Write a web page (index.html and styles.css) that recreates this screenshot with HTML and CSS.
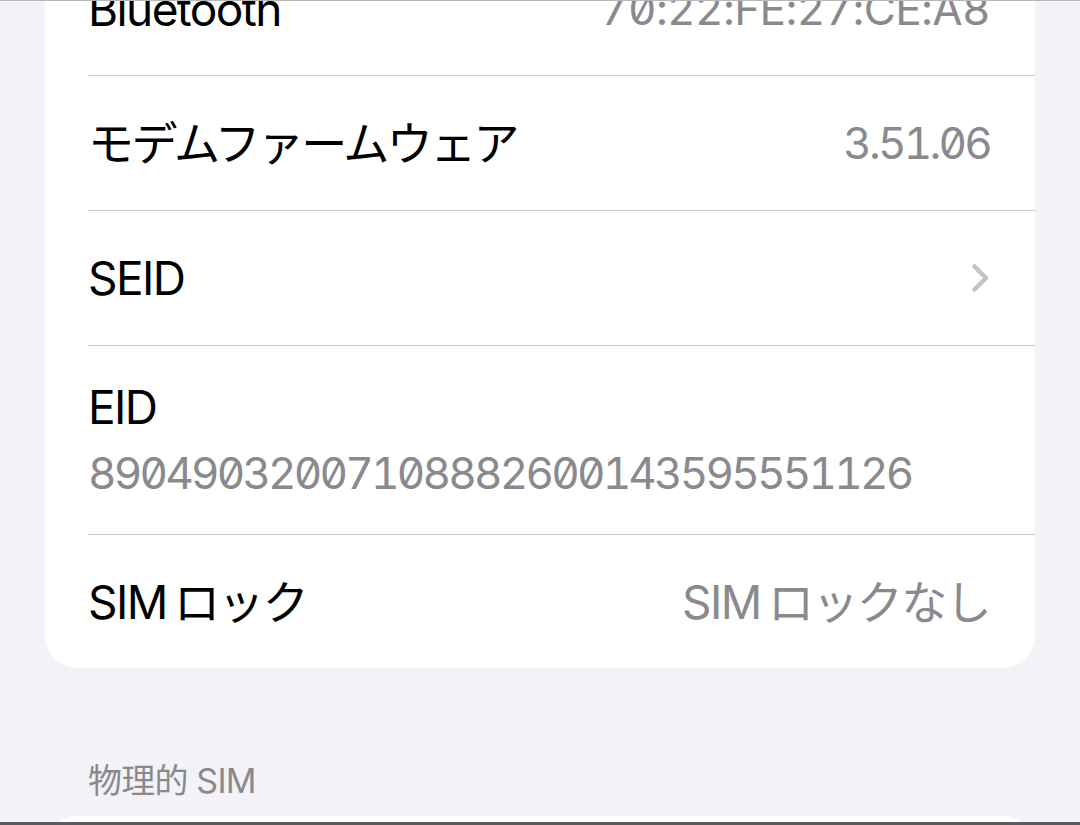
FILE: index.html
```html
<!DOCTYPE html>
<html lang="ja">
<head>
    <meta charset="utf-8">
    <title>情報</title>
    <link rel="stylesheet" href="styles.css">
</head>
<body>
    <div class="screen">
        <div class="card">
            <div class="row">
                <div class="row-inner">
                    <span class="label">Bluetooth</span>
                    <span class="value num mac">70:22:FE:27:CE:A8</span>
                </div>
            </div>
            <div class="row">
                <div class="row-inner">
                    <span class="label jp">モデムファームウェア</span>
                    <span class="value num">3.51.06</span>
                </div>
            </div>
            <div class="row">
                <div class="row-inner">
                    <span class="label">SEID</span>
                    <svg class="chevron" width="18" height="30" viewBox="0 0 18 30">
                        <path d="M3.5 3.5 L15 15 L3.5 26.5" fill="none" stroke="#c4c4c7" stroke-width="4.5" stroke-linecap="round" stroke-linejoin="round"/>
                    </svg>
                </div>
            </div>
            <div class="row">
                <div class="row-inner stacked">
                    <span class="label">EID</span>
                    <span class="value num">89049032007108882600143595551126</span>
                </div>
            </div>
            <div class="row">
                <div class="row-inner">
                    <span class="label mixed">SIM ロック</span>
                    <span class="value mixed">SIM ロックなし</span>
                </div>
            </div>
        </div>

        <div class="section-title">物理的 SIM</div>
        <div class="card next"></div>
    </div>
</body>
</html>
```

FILE: styles.css
```css
body {
    margin: 0;
    background-color: #f2f2f7;
    font-family: Inter, "Noto Sans CJK JP", sans-serif;
}
.screen {
    height: 825px;
    overflow: hidden;
    box-sizing: border-box;
    border-top: 1px solid #b8b8bc;
    border-bottom: 3px solid #5b5b5f;
    background-color: #f2f2f7;
}
.card {
    margin: -58px 45px 0;
    background-color: #fff;
    border-radius: 0 0 32px 32px;
}
.row {
    padding-left: 43px;
}
.row-inner {
    display: flex;
    justify-content: space-between;
    align-items: center;
    min-height: 135px;
    padding-right: 45px;
    border-bottom: 1px solid #c9c9cc;
    box-sizing: border-box;
}
.row:first-child .row-inner {
    min-height: 133px;
}
.row:last-child .row-inner {
    border-bottom: none;
    min-height: 133px;
}
.row-inner.stacked {
    flex-direction: column;
    align-items: flex-start;
    justify-content: center;
    min-height: 189px;
    gap: 10px;
}
.label {
    font-size: 46px;
    line-height: 56px;
    color: #000;
    letter-spacing: -1.6px;
}
.label.jp {
    letter-spacing: -2.6px;
}
.value {
    font-size: 46px;
    line-height: 56px;
    color: #8a8a8e;
    letter-spacing: -1.6px;
}
.value.num {
    font-size: 44px;
    letter-spacing: -2.8px;
    font-feature-settings: "tnum" 1, "zero" 1;
}
.value.mac {
    letter-spacing: -0.6px;
}
.mixed {
    word-spacing: -4px;
}
.chevron {
    display: block;
    margin-right: 1px;
}
.section-title {
    margin-top: 93px;
    padding-left: 88px;
    font-size: 34px;
    line-height: 40px;
    color: #8a8a8e;
    letter-spacing: -0.8px;
}
.card.next {
    margin-top: 15px;
    height: 60px;
    border-radius: 32px 32px 0 0;
}
```
